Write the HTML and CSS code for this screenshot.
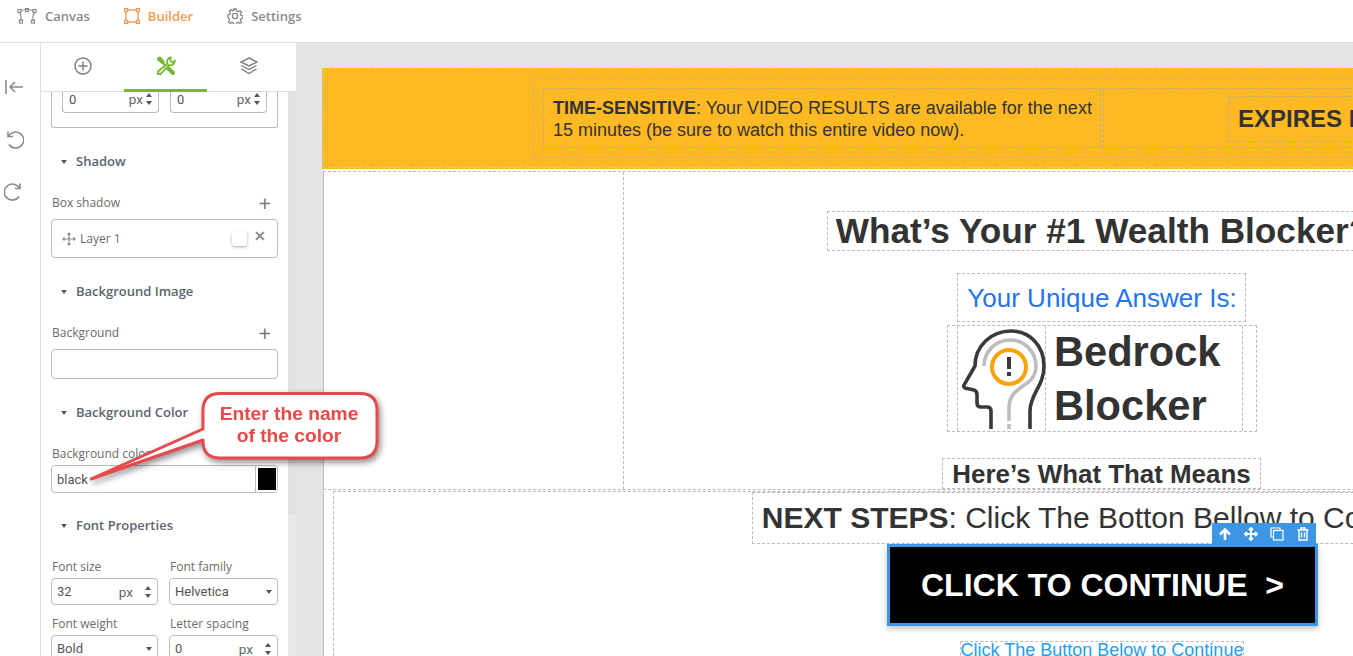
FILE: index.html
```html
<!doctype html>
<html lang="en">
<head>
    <meta charset="UTF-8" />
    <title>Builder</title>
    <link rel="stylesheet" href="styles.css">
</head>
<body>
<div class="app">
    <header class="top-bar">
        <a class="top-link">
            <svg width="20" height="16" viewBox="0 0 20 16" fill="none" stroke="#8a8a8a" stroke-width="1.2"><path d="M3 5C5 9 4 12 4 13M17 5C15 9 16 12 16 13M4 3C7 1 13 1 16 3"/><rect x="1" y="1.5" width="3" height="3" /><rect x="16" y="1.5" width="3" height="3" /><rect x="8.5" y="0.5" width="3" height="3" /><rect x="2.5" y="12" width="3" height="3" /><rect x="14.5" y="12" width="3" height="3" /></svg>
            Canvas
        </a>
        <a class="top-link active">
            <svg width="16" height="16" viewBox="0 0 16 16" fill="none" stroke="#f59a4f" stroke-width="1.3"><path d="M2 3.5V12.5M14 3.5V12.5M3.5 2H12.5M3.5 14H12.5"/><rect x="0.6" y="0.6" width="3" height="3" /><rect x="12.4" y="0.6" width="3" height="3" /><rect x="0.6" y="12.4" width="3" height="3" /><rect x="12.4" y="12.4" width="3" height="3" /></svg>
            Builder
        </a>
        <a class="top-link">
            <svg width="16" height="16" viewBox="0 0 16 16" fill="none" stroke="#8a8a8a" stroke-width="1.3"><circle cx="8" cy="8" r="2.6"/><path d="M6.8 1h2.4l.4 2 1.5.7 1.8-1.1 1.6 1.6-1.1 1.8.7 1.5 1.9.4v2.2l-1.9.4-.7 1.5 1.1 1.8-1.6 1.6-1.8-1.1-1.5.7-.4 1.9H6.8l-.4-1.9-1.5-.7-1.8 1.1-1.6-1.6 1.1-1.8-.7-1.5L.9 9.1V6.9l1.9-.4.7-1.5-1.1-1.8 1.6-1.6 1.8 1.1 1.5-.7z"/></svg>
            Settings
        </a>
    </header>

    <div class="workspace">
        <nav class="rail">
            <svg class="rail-first" width="20" height="16" viewBox="0 0 20 16" fill="none" stroke="#8a8a8a" stroke-width="1.6"><path d="M2 1V15M19 8H6M11 3L6 8L11 13"/></svg>
            <svg width="20" height="20" viewBox="0 0 20 20" fill="none" stroke="#8a8a8a" stroke-width="1.6"><path d="M4.5 7.5A8 8 0 1 1 5 15.500"/><path d="M4 2.500V7.500H9"/></svg>
            <svg width="20" height="20" viewBox="0 0 20 20" fill="none" stroke="#8a8a8a" stroke-width="1.6"><path d="M15.500 7.500A8 8 0 1 0 15 15.500"/><path d="M16 2.500V7.500H11"/></svg>
        </nav>

        <aside class="panel">
            <div class="tabs">
                <div class="tab">
                    <svg width="18" height="18" viewBox="0 0 18 18" fill="none" stroke="#7c7c7c" stroke-width="1.4"><circle cx="9" cy="9" r="8"/><path d="M9 4.500V13.500M4.500 9H13.500"/></svg>
                </div>
                <div class="tab tab-on">
                    <svg width="20" height="20" viewBox="0 0 20 20" fill="none" stroke="#76b82f"><path d="M2 1.500L4.500 1L8.500 6L6.500 8L1.500 4Z" fill="#76b82f" stroke-width="1"/><path d="M7 7L11 11" stroke-width="1.800"/><path d="M11.500 11.500L17 17" stroke-width="4" stroke-linecap="round"/><path d="M14.500 1.500A4.300 4.300 0 0 0 11.500 7.500L2 15.500V18H4.500L13 9A4.300 4.300 0 0 0 18.800 5L16.500 6.500L14.500 5Z" fill="#fff" stroke-width="1.800"/></svg>
                </div>
                <div class="tab">
                    <svg width="18" height="18" viewBox="0 0 18 18" fill="none" stroke="#7c7c7c" stroke-width="1.400"><path d="M9 1L17 5L9 9L1 5Z"/><path d="M1.500 8.500L9 12.500L16.500 8.500M1.500 12L9 16.500L16.500 12"/></svg>
                </div>
            </div>

            <div class="panel-body">
                <div class="props">
                    <div class="cut-box">
                        <div class="field small"><span class="val">0</span><span class="unit">px</span><i class="spin"></i></div>
                        <div class="field small"><span class="val">0</span><span class="unit">px</span><i class="spin"></i></div>
                    </div>

                    <h4 class="prop-title">Shadow</h4>
                    <div class="prop-label">Box shadow <span class="add">+</span></div>
                    <div class="layer-box">
                        <svg width="14" height="14" viewBox="0 0 14 14" fill="none" stroke="#8a8a8a" stroke-width="1.200"><path d="M7 1V13M1 7H13M5.500 2.500L7 1L8.500 2.500M5.500 11.500L7 13L8.500 11.500M2.500 5.500L1 7L2.500 8.500M11.500 5.500L13 7L11.500 8.500"/></svg>
                        <span class="layer-name">Layer 1</span>
                        <i class="layer-swatch"></i>
                        <span class="layer-x">&#10005;</span>
                    </div>

                    <h4 class="prop-title">Background Image</h4>
                    <div class="prop-label">Background <span class="add">+</span></div>
                    <div class="field bg-input"></div>

                    <h4 class="prop-title">Background Color</h4>
                    <div class="prop-label near">Background color</div>
                    <div class="field color-input"><span class="val">black</span><span class="color-cell"><i></i></span></div>

                    <h4 class="prop-title tight">Font Properties</h4>
                    <div class="prop-row first">
                        <div class="prop-col left">
                            <div class="prop-label flat">Font size</div>
                            <div class="field"><span class="val">32</span><span class="unit wide">px</span><i class="spin"></i></div>
                        </div>
                        <div class="prop-col">
                            <div class="prop-label flat">Font family</div>
                            <div class="field"><span class="val">Helvetica</span><i class="caret"></i></div>
                        </div>
                    </div>
                    <div class="prop-row">
                        <div class="prop-col left">
                            <div class="prop-label flat">Font weight</div>
                            <div class="field"><span class="val">Bold</span><i class="caret"></i></div>
                        </div>
                        <div class="prop-col">
                            <div class="prop-label flat">Letter spacing</div>
                            <div class="field"><span class="val">0</span><span class="unit wide">px</span><i class="spin"></i></div>
                        </div>
                    </div>
                </div>
                <div class="scroll-strip"><div class="scroll-thumb"></div></div>
            </div>
        </aside>

        <main class="canvas">
            <div class="page">
                <section class="banner">
                    <div class="banner-row">
                        <div class="banner-col">
                            <div class="banner-text"><b>TIME-SENSITIVE</b>: Your VIDEO RESULTS are available for the next<br>15 minutes (be sure to watch this entire video now).</div>
                            <div class="banner-side"><div class="expires">EXPIRES IN</div></div>
                        </div>
                    </div>
                </section>

                <section class="answer">
                    <div class="answer-left"></div>
                    <div class="answer-main">
                        <h1 class="blocker-title dash">What’s Your #1 Wealth Blocker?</h1>
                        <div class="unique dash">Your Unique Answer Is:</div>
                        <div class="result dash">
                            <div class="result-inner dash">
                                <div class="result-icon">
                                    <svg width="88" height="104" viewBox="0 0 88 104" fill="none" stroke-width="3.600">
                                        <path d="M26 40A26 26 0 0 1 78 40C78 62 51 58 51 82V95M51 98V103" stroke="#bdbdbd"/>
                                        <path d="M33 103V85Q33 81 29 81H23Q19 81 19 77V69Q19 65 16 64L7 62Q5 61 6 59L17 40C17 20 33 5 53 5C72 5 86 20 86 40C86 60 72 68 72 85V103" stroke="#3a3a3a"/>
                                        <circle cx="51" cy="41" r="17" stroke="#f7a30a" stroke-width="4"/>
                                        <path d="M51 31V43M51 46V50" stroke="#3a3a3a" stroke-width="4"/>
                                    </svg>
                                </div>
                                <div class="result-name">Bedrock Blocker</div>
                            </div>
                        </div>
                        <h2 class="means dash">Here’s What That Means</h2>
                    </div>
                </section>

                <section class="steps">
                    <div class="steps-inner">
                        <div class="next-steps dash"><b>NEXT STEPS</b>: Click The Botton Bellow to Continue</div>
                        <div class="cta">
                            <div class="cta-tools">
                                <svg width="14" height="14" viewBox="0 0 14 14" fill="none" stroke="#fff" stroke-width="2.600"><path d="M7 13V3M2 7.500L7 2.500L12 7.500"/></svg>
                                <svg width="14" height="14" viewBox="0 0 14 14" fill="none" stroke="#fff" stroke-width="1.800"><path d="M7 1V13M1 7H13M5 3L7 1L9 3M5 11L7 13L9 11M3 5L1 7L3 9M11 5L13 7L11 9"/></svg>
                                <svg width="14" height="14" viewBox="0 0 14 14" fill="none" stroke="#fff" stroke-width="1.200"><path d="M10 3V1H1V10H3"/><rect x="3.500" y="3.500" width="9.500" height="9.500"/></svg>
                                <svg width="14" height="14" viewBox="0 0 14 14" fill="none" stroke="#fff" stroke-width="1.400"><path d="M1.500 3H12.500M5 3V1H9V3M3 3V13H11V3M5.500 5.500V10.500M8.500 5.500V10.500"/></svg>
                            </div>
                            CLICK TO CONTINUE &nbsp;&gt;
                        </div>
                        <div class="below dash">Click The Button Below to Continue</div>
                    </div>
                </section>
            </div>
        </main>
    </div>

    <div class="callout">
        <svg width="300" height="100" viewBox="0 0 300 100" fill="#fff" stroke="#e8494a" stroke-width="3">
            <path d="M130 1.500H270Q287 1.500 287 18.500V49Q287 66 270 66H130Q113 66 113 49V48L1 87L113 37V18.500Q113 1.500 130 1.500Z" stroke-linejoin="round"/>
        </svg>
        <div class="callout-text">Enter the name<br>of the color</div>
    </div>
</div>
</body>
</html>
```
FILE: styles.css
```css
* {
    box-sizing: border-box;
}

html, body {
    height: 100%;
}

body {
    margin: 0;
    font-family: "Open Sans", sans-serif;
    overflow: hidden;
    background: #fff;
}

.app {
    position: relative;
    height: 656px;
    overflow: hidden;
}

/* top bar */
.top-bar {
    display: flex;
    align-items: center;
    height: 43px;
    padding: 0 0 11px 17px;
    gap: 34px;
    border-bottom: 1px solid #dedede;
    background: #fff;
}

.top-link {
    display: flex;
    align-items: center;
    gap: 8px;
    font-size: 13px;
    font-weight: 600;
    color: #8a8a8a;
}

.top-link.active {
    color: #f59a4f;
}

.workspace {
    display: flex;
    height: 613px;
}

/* left rail */
.rail {
    flex: 0 0 41px;
    display: flex;
    flex-direction: column;
    gap: 32px;
    padding: 36px 0 0 4px;
    border-right: 1px solid #dedede;
}

.rail-first {
    margin-bottom: 2px;
}

/* properties panel */
.panel {
    flex: 0 0 255px;
    display: flex;
    flex-direction: column;
}

.tabs {
    display: grid;
    grid-template-columns: 83px 83px 83px;
    height: 49px;
    border-bottom: 1px solid #dedede;
}

.tab {
    display: flex;
    align-items: center;
    justify-content: center;
    padding-bottom: 3px;
}

.tab-on {
    border-bottom: 3px solid #76b82f;
    height: 49px;
    padding-bottom: 0;
}

.panel-body {
    flex: 1;
    display: flex;
    min-height: 0;
}

.props {
    flex: 0 0 247px;
    padding: 0 10px;
    overflow: hidden;
    color: #666;
}

.scroll-strip {
    flex: 0 0 8px;
    background: #e9e9e9;
}

.scroll-thumb {
    height: 423px;
    background: #e2e2e2;
}

.cut-box {
    display: flex;
    gap: 11px;
    height: 36px;
    padding: 0 10px;
    border: 1px solid #bbb;
    border-top: 0;
    border-radius: 0 0 3px 3px;
}

.prop-title {
    margin: 24px 0 0;
    padding-left: 25px;
    position: relative;
    height: 18px;
    line-height: 18px;
    font-size: 13px;
    font-weight: 600;
    color: #5c6470;
}

.prop-title.tight {
    margin-top: 23px;
}

.prop-title::before {
    content: "";
    position: absolute;
    left: 10px;
    top: 8px;
    border: 3.500px solid transparent;
    border-top: 4px solid #555;
    border-bottom: 0;
}

.prop-label {
    display: flex;
    justify-content: space-between;
    align-items: center;
    margin-top: 24px;
    padding-left: 1px;
    height: 16px;
    font-size: 12px;
    color: #6b6b6b;
}

.prop-label.flat {
    margin-top: 0;
}

.add {
    font-size: 22px;
    font-weight: 400;
    color: #777;
    line-height: 16px;
    padding-right: 7px;
}

.field {
    display: flex;
    align-items: center;
    height: 27px;
    margin-top: 4px;
    padding: 0 5px;
    border: 1px solid #bbb;
    border-radius: 4px;
    font-family: Roboto, sans-serif;
    font-size: 13px;
    color: #555;
    background: #fff;
}

.field.small {
    flex: 0 0 97px;
    height: 21px;
    margin-top: 0;
    padding: 0 5px 6px 6px;
    border-top: 0;
    border-radius: 0 0 4px 4px;
}

.val {
    flex: 1;
}

.unit {
    margin-right: 3px;
    font-size: 13.500px;
    color: #666;
}

.unit.wide {
    margin-right: 12px;
}

.spin {
    position: relative;
    width: 7px;
    height: 10px;
}

.spin::before, .spin::after {
    content: "";
    position: absolute;
    left: 0;
    border: 3.500px solid transparent;
}

.spin::before {
    top: -1px;
    border-top: 0;
    border-bottom: 4px solid #555;
}

.spin::after {
    bottom: -1px;
    border-bottom: 0;
    border-top: 4px solid #555;
}

.caret {
    border: 3.500px solid transparent;
    border-top: 4px solid #555;
    border-bottom: 0;
}

.layer-box {
    display: flex;
    align-items: center;
    height: 39px;
    margin-top: 9px;
    padding: 0 10px;
    border: 1px solid #bbb;
    border-radius: 4px;
}

.layer-name {
    flex: 1;
    margin-left: 4px;
    font-size: 12px;
    color: #6b6b6b;
}

.layer-swatch {
    width: 15px;
    height: 15px;
    margin-right: 7px;
    background: #fff;
    border-radius: 3px;
    box-shadow: 0 1px 3px rgba(0, 0, 0, .35);
}

.layer-x {
    font-size: 14px;
    font-weight: 700;
    color: #8a8a8a;
    margin-top: -7px;
    margin-right: 1px;
}

.bg-input {
    height: 30px;
    margin-top: 9px;
}

.color-input {
    height: 28px;
    padding-right: 0;
    overflow: hidden;
}

.color-cell {
    display: flex;
    align-items: center;
    justify-content: center;
    width: 22px;
    height: 100%;
    border-left: 1px solid #bbb;
}

.color-cell i {
    width: 18px;
    height: 22px;
    background: #000;
}

.prop-row {
    display: flex;
    gap: 11px;
    margin-top: 10px;
}

.prop-row.first {
    margin-top: 24px;
}

.prop-col {
    flex: 1;
}

.prop-col.left {
    flex: 0 0 107px;
}

/* canvas and the page being edited */
.canvas {
    flex: 1;
    min-width: 0;
    overflow: hidden;
    background: #e4e4e4;
    padding: 25px 0 0 26px;
    font-family: "Liberation Sans", Arial, sans-serif;
    color: #333;
}

.page {
    width: 1553px;
    height: 620px;
    background: #fff;
    box-shadow: inset 1px 0 0 #e4e4e4;
}

.dash {
    border: 1px dashed #bbb;
}

.banner {
    height: 101px;
    padding: 10px 0 0 211px;
    background: #ffb923;
    outline: 1px dashed #c9c9c9;
    outline-offset: -2px;
}

.banner-row {
    height: 80px;
    width: 1100px;
    padding-top: 9px;
    border-top: 1px dashed #c9b27a;
    border-bottom: 1px dashed #c9b27a;
    border-left: 1px dashed #c9b27a;
}

.banner-col {
    display: flex;
    height: 60px;
    margin-left: 9px;
    gap: 2px;
}

.banner-text {
    width: 558px;
    padding: 8px 0 0 9px;
    border: 1px dashed #b9ae8e;
    font-size: 18px;
    line-height: 22px;
    white-space: nowrap;
}

.banner-side {
    flex: 1;
    padding: 7px 0 0 124px;
    border: 1px dashed #b9ae8e;
}

.expires {
    width: 300px;
    height: 46px;
    padding: 0 9px;
    border: 1px dashed #b9ae8e;
    font-size: 24px;
    font-weight: 700;
    line-height: 44px;
}

.answer {
    display: flex;
    height: 319px;
    margin: 2px 0 1px 1px;
    border-bottom: 1px dashed #bbb;
    border-top: 1px dashed #bbb;
    border-left: 1px solid #bbb;
}

.answer-left {
    flex: 0 0 300px;
    border-right: 1px dashed #bbb;
}

.answer-main {
    flex: 0 0 960px;
    display: flex;
    flex-direction: column;
    align-items: center;
}

.blocker-title {
    margin: 39px 2px 0 0;
    padding: 0 8px;
    height: 40px;
    font-size: 35.200px;
    line-height: 38px;
    white-space: nowrap;
}

.unique {
    margin: 22px 5px 0 0;
    padding: 8px 8px 0 9px;
    height: 50px;
    font-size: 26px;
    line-height: 32px;
    color: #1f75ec;
}

.result {
    margin: 3px 4px 0 0;
    padding: 0 13px 0 9px;
    height: 107px;
    border-bottom: 1px dashed #bbb;
}

.result-inner {
    display: flex;
    height: 105px;
    border-top: 0;
    border-bottom: 0;
}

.result-icon {
    width: 88px;
    border-right: 1px dashed #bbb;
}

.result-name {
    width: 196px;
    padding-left: 8px;
    font-size: 41.600px;
    font-weight: 700;
    line-height: 54px;
    margin-top: -1px;
}

.means {
    margin: 26px 5px 0 0;
    padding: 1px 9px 0;
    height: 31px;
    font-size: 25.900px;
    line-height: 29px;
    white-space: nowrap;
}

.steps {
    height: 170px;
    margin-left: 1px;
    padding-left: 9px;
    border-left: 1px solid #bbb;
}

.steps-inner {
    display: flex;
    flex-direction: column;
    align-items: center;
    width: 1542px;
    height: 170px;
    border-top: 1px dashed #bbb;
    border-left: 1px dashed #bbb;
}

.next-steps {
    height: 52px;
    margin-right: 4px;
    padding: 0 9px;
    font-size: 30px;
    line-height: 50px;
    white-space: nowrap;
}

.cta {
    position: relative;
    width: 431px;
    height: 82px;
    margin-right: 4px;
    border: 3px solid #3d96e3;
    background: #000;
    color: #fff;
    font-size: 32px;
    font-weight: 700;
    line-height: 76px;
    text-align: center;
    box-shadow: 0 3px 6px rgba(0, 0, 0, .25);
}

.cta-tools {
    position: absolute;
    top: -24px;
    right: -1px;
    display: flex;
    align-items: center;
    gap: 12px;
    width: 104px;
    height: 21px;
    padding-left: 6px;
    background: #3d96e3;
}

.below {
    margin: 15px 5px 0 0;
    height: 20px;
    border-bottom: 0;
    font-size: 18px;
    line-height: 16px;
    color: #1e9ff2;
    white-space: nowrap;
}

/* annotation on top of the screenshot */
.callout {
    position: absolute;
    left: 90px;
    top: 392px;
    width: 300px;
    height: 100px;
    filter: drop-shadow(2px 3px 3px rgba(0, 0, 0, .45));
}

.callout svg {
    display: block;
}

.callout-text {
    position: absolute;
    left: 112px;
    top: 11px;
    width: 174px;
    font-family: "Liberation Sans", Arial, sans-serif;
    font-size: 19.200px;
    font-weight: 700;
    line-height: 22px;
    text-align: center;
    color: #e8494a;
}
```
